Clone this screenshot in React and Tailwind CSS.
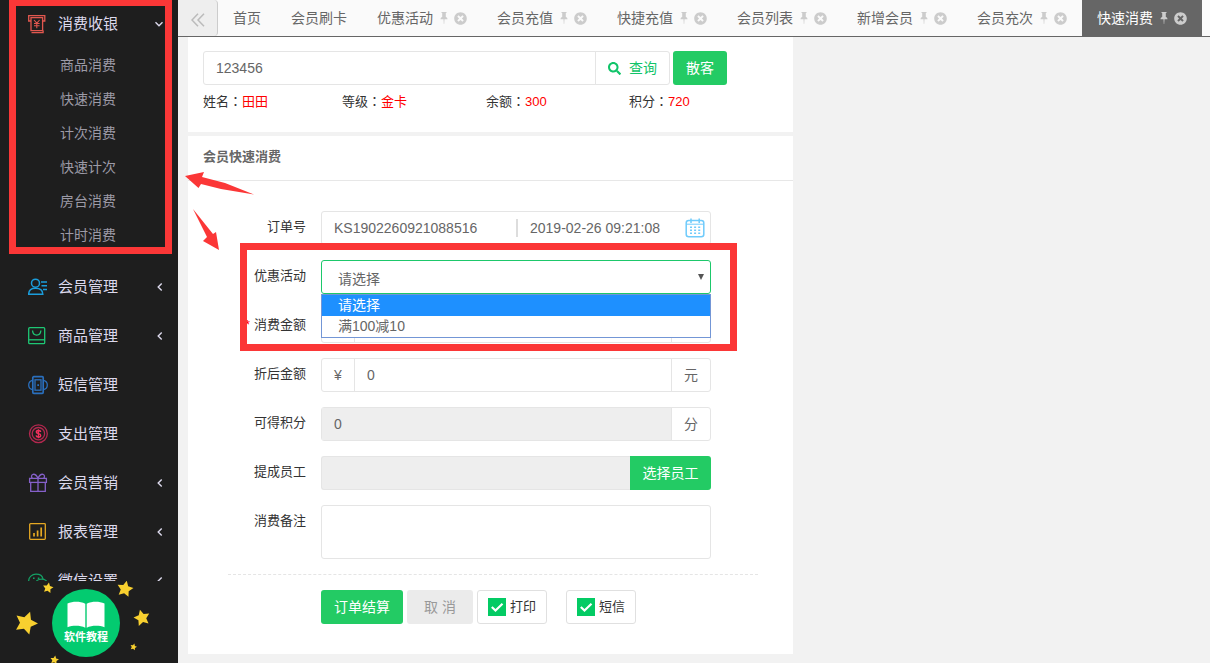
import React, { useState } from 'react';
import clsx from 'clsx';
import { FaSearch, FaTimesCircle } from 'react-icons/fa';

const subMenu = ['商品消费', '快速消费', '计次消费', '快速计次', '房台消费', '计时消费'];

const menu = [
  { name: '会员管理', icon: MemberIcon, hasChildren: true },
  { name: '商品管理', icon: BagIcon, hasChildren: true },
  { name: '短信管理', icon: SmsIcon },
  { name: '支出管理', icon: ExpenseIcon },
  { name: '会员营销', icon: GiftIcon, hasChildren: true },
  { name: '报表管理', icon: ReportIcon, hasChildren: true },
  { name: '微信设置', icon: WechatIcon, hasChildren: true },
];

const tabs = [
  { name: '首页' },
  { name: '会员刷卡' },
  { name: '优惠活动', closable: true },
  { name: '会员充值', closable: true },
  { name: '快捷充值', closable: true },
  { name: '会员列表', closable: true },
  { name: '新增会员', closable: true },
  { name: '会员充次', closable: true },
  { name: '快速消费', closable: true, active: true },
];

const activities = ['请选择', '满100减10'];

function Icon({ className, children }) {
  return (
    <svg
      viewBox="0 0 20 20"
      className={clsx('h-5 w-5 shrink-0', className)}
      fill="none"
      stroke="currentColor"
      strokeWidth="1.3"
    >
      {children}
    </svg>
  );
}

function CashIcon() {
  return (
    <Icon className="text-[#e2574f]">
      <path d="M3 7H.7V1.600h16.100V7h-2.300" />
      <path d="M3 3.700h11.600v13H3z" />
      <path d="M3.500 18.600h11.600v-2" />
      <path d="M6 6l2.800 3.200L11.600 6M6 9.500h5.600M6 11.800h5.600M8.800 9.200v5" strokeWidth="1.1" />
    </Icon>
  );
}

function MemberIcon() {
  return (
    <Icon className="text-[#1b9ddb]">
      <circle cx="7.500" cy="6.200" r="4" strokeWidth="1.500" />
      <path d="M.7 17.300c0-4 2.500-6 6.800-6s7.300 2 7.300 6z" strokeWidth="1.500" />
      <path d="M13 5h6M13.500 8.700H19M15 12.500h4" strokeWidth="1.500" />
    </Icon>
  );
}

function BagIcon() {
  return (
    <Icon className="text-[#1ec774]">
      <rect x=".7" y="1.700" width="16" height="16" rx="1" />
      <path d="M.7 13.800h16" />
      <path d="M4.500 4.500c.3 3 2 4.600 4.200 4.600s3.900-1.600 4.200-4.600" />
    </Icon>
  );
}

function SmsIcon() {
  return (
    <Icon className="text-[#2a6fbd]">
      <rect x="4.800" y="1.700" width="10.400" height="16.600" rx="1" strokeWidth="1.700" />
      <rect x="7" y="4.800" width="6" height="10.400" />
      <path d="M9.300 9.300h1.700V11H9.300z" fill="currentColor" stroke="none" />
      <path d="M4.500 5.300C1.700 6 .7 8 .7 10s1 4 3.800 4.700M15.500 5.300c2.800.7 3.800 2.700 3.800 4.700s-1 4-3.800 4.700" />
    </Icon>
  );
}

function ExpenseIcon() {
  return (
    <Icon className="text-[#b3284f]">
      <circle cx="10.400" cy="9.700" r="8.900" />
      <circle cx="10.400" cy="9.700" r="6.200" />
      <path
        d="M12.600 8c0-1-.9-1.500-2.200-1.500S8.300 7 8.300 8s.9 1.400 2.100 1.600 2.300.7 2.300 1.800-1 1.600-2.300 1.600-2.200-.6-2.300-1.600M10.400 5.300v8.900"
        stroke="#f0305c"
        strokeWidth="1.400"
      />
    </Icon>
  );
}

function GiftIcon() {
  return (
    <Icon className="text-[#8560c9]">
      <rect x="1.600" y="5.400" width="16.800" height="4" />
      <path d="M2.700 9.400v8.900h14.600V9.400M10 5.400v12.900" />
      <path d="M10 5.200C8.500 2 6.500 1 5 1.300s-2 2.500-.7 3.900M10 5.200c1.500-3.200 3.500-4.200 5-3.900s2 2.500.7 3.900" />
    </Icon>
  );
}

function ReportIcon() {
  return (
    <Icon className="text-[#e5a823]">
      <rect x="1.700" y="1.700" width="15.600" height="15.600" rx=".8" />
      <path d="M6 11v3.500M9.600 8.500v6M13.200 5.500v9" strokeWidth="1.700" />
    </Icon>
  );
}

function WechatIcon() {
  return (
    <Icon className="text-[#14a065]">
      <path d="M3.500 14.500C1.500 13.200.7 11.500.7 9.600.7 6.200 3.900 3.200 8 3.200c3.600 0 6.500 2 7 4.900" />
      <path d="M13.500 8.200c3.500 0 6 2 6 4.700s-2.500 4.600-6 4.600-6-2-6-4.600 2.500-4.700 6-4.700z" />
      <path d="M5 6.500h1.600v1.600H5zM9.800 6.500h1.600v1.600H9.800z" fill="currentColor" stroke="none" />
    </Icon>
  );
}

function PinIcon() {
  return (
    <svg viewBox="0 0 8 12" className="h-3 w-2" fill="currentColor">
      <path d="M1.500 0h5v1h-.7v4c1 .4 1.700 1.200 1.700 2.200h-3L4.200 12h-.4L3.500 7.200h-3C.5 6.200 1.200 5.400 2.200 5V1h-.7z" />
    </svg>
  );
}

function CalendarIcon() {
  return (
    <svg viewBox="0 0 20 20" className="h-5 w-5" fill="none" stroke="#6fcbfb" strokeWidth="1.500">
      <rect x="1.200" y="2.500" width="17.600" height="16.300" rx="2.500" />
      <path d="M1.200 6.200h17.600" strokeWidth="1" />
      <path d="M6 .5v4.500M14.200 .5v4.500" />
      <path d="M5 9.300h10.500M5 12.300h10.500M5 15.200h10.500" strokeDasharray="2 2.100" />
    </svg>
  );
}

function Star({ x, y, r, turn }) {
  const points = Array.from({ length: 10 }, (_, i) => {
    const radius = i % 2 === 0 ? r : r * 0.5;
    const angle = ((turn + i * 36 - 90) * Math.PI) / 180;
    return `${x + radius * Math.cos(angle)},${y + radius * Math.sin(angle)}`;
  }).join(' ');
  return <polygon points={points} />;
}

function Tutorial() {
  return (
    <div className="relative h-[82px] shrink-0 overflow-hidden">
      <svg viewBox="0 0 178 82" className="absolute left-0 top-0 h-[82px] w-[178px]" fill="#f8d02f">
        <Star x={26} y={42} r={12} turn={20} />
        <Star x={48} y={7} r={5.5} turn={10} />
        <Star x={125} y={8} r={8.5} turn={12} />
        <Star x={142} y={37} r={8.500} turn={-14} />
        <Star x={133.500} y={66} r={3.500} turn={15} />
        <Star x={54.500} y={79} r={4.500} turn={10} />
      </svg>
      <button className="relative ml-[52px] mt-2 flex h-[68px] w-[68px] flex-col items-center rounded-full bg-[#03cb70] pt-3">
        <svg viewBox="0 0 38 28" className="h-7 w-[38px]" fill="#fff">
          <path d="M.5 2.500C6 .2 13 .2 18.300 2.800v24C13 24.300 6 24.300.5 26.300z" />
          <path d="M37.500 2.500C32 .2 25 .2 19.700 2.800v24c5.300-2.500 12.300-2.500 17.800-.5z" />
        </svg>
        <span className="text-[11px] leading-4 font-bold text-white">软件教程</span>
      </button>
    </div>
  );
}

function Sidebar() {
  return (
    <aside className="flex w-[178px] shrink-0 flex-col bg-[#1e1e1e]">
      <nav className="min-h-0 flex-1 overflow-hidden">
        <div className="relative pb-[10px]">
          <a href="#cashier" className="flex h-12 items-center gap-[10px] pr-[14px] pl-7 text-[15px] text-[#dcd9ec]">
            <CashIcon />
            <span className="flex-1">消费收银</span>
            <svg viewBox="0 0 10 10" className="h-[10px] w-[10px]" fill="none" stroke="currentColor" strokeWidth="1.400">
              <path d="M1.500 3.200L5 6.700l3.500-3.500" />
            </svg>
          </a>
          <ul>
            {subMenu.map((name) => (
              <li key={name}>
                <a href="#sub" className="flex h-[34px] items-center pl-[60px] text-sm text-[#9c9aa6]">
                  {name}
                </a>
              </li>
            ))}
          </ul>
          <div className="pointer-events-none absolute top-0 left-[9px] h-[254px] w-[163px] border-[7px] border-t-[6px] border-[#fb3737]" />
        </div>
        <ul>
          {menu.map(({ name, icon: MenuIcon, hasChildren }) => (
            <li key={name}>
              <a href="#menu" className="flex h-[49px] items-center gap-[10px] pr-[13px] pl-7 text-[15px] text-[#dcd9ec]">
                <MenuIcon />
                <span className="flex-1 pt-0.5">{name}</span>
                {hasChildren && (
                  <svg viewBox="0 0 10 10" className="h-[10px] w-[10px]" fill="none" stroke="currentColor" strokeWidth="1.400">
                    <path d="M6.700 1.500L3.200 5l3.500 3.500" />
                  </svg>
                )}
              </a>
            </li>
          ))}
        </ul>
      </nav>
      <Tutorial />
    </aside>
  );
}

function TabBar() {
  return (
    <div className="flex h-[37px] shrink-0 overflow-hidden border-b border-[#666] bg-[#fafafa]">
      <button
        aria-label="收起"
        className="flex w-10 shrink-0 items-center justify-center rounded-r-sm border-r border-[#ccc] bg-[#eee]"
      >
        <svg viewBox="0 0 14 14" className="mt-1 h-[14px] w-[14px]" fill="none" stroke="#bbb" strokeWidth="1.500">
          <path d="M7 .7L1 7l6 6.300M13 .7L7 7l6 6.300" />
        </svg>
      </button>
      {tabs.map((tab) => (
        <div
          key={tab.name}
          className={clsx(
            'flex shrink-0 items-center px-[15px] text-sm',
            tab.active ? 'bg-[#666] text-white' : 'text-[#666]'
          )}
        >
          <a href="#tab">{tab.name}</a>
          {tab.closable && (
            <span className="flex items-center text-[#ccc]">
              <button aria-label="固定" className="ml-[7px]">
                <PinIcon />
              </button>
              <button aria-label="关闭" className="ml-[6px]">
                <FaTimesCircle className="h-[13px] w-[13px]" />
              </button>
            </span>
          )}
        </div>
      ))}
    </div>
  );
}

function MemberInfo({ label, value }) {
  return (
    <span>
      {label}
      <span className="font-['Noto_Sans_CJK_TC',sans-serif]" lang="zh-TW">：</span>
      <span className="text-[#f00]">{value}</span>
    </span>
  );
}

function SearchCard() {
  return (
    <section className="bg-white px-[15px] pt-[14px] pb-5">
      <div className="flex">
        <input
          aria-label="会员卡号"
          defaultValue="123456"
          className="h-[34px] w-[393px] rounded-l-[3px] border border-[#e5e5e5] px-3 text-sm text-[#666]"
        />
        <button className="-ml-px flex h-[34px] w-[75px] items-center justify-center gap-2 rounded-r-[3px] border border-[#e5e5e5] text-sm text-[#10c469]">
          <FaSearch className="h-[13px] w-[13px]" />
          查询
        </button>
        <button className="ml-[3px] h-[34px] w-[54px] rounded-[3px] bg-[#23cb64] text-sm text-white">散客</button>
      </div>
      <div className="grid grid-cols-[139px_144px_143px_1fr] pt-1.5 text-[13px] leading-5 text-[#333]">
        <MemberInfo label="姓名" value="田田" />
        <MemberInfo label="等级" value="金卡" />
        <MemberInfo label="余额" value="300" />
        <MemberInfo label="积分" value="720" />
      </div>
    </section>
  );
}

function Field({ id, label, required, children }) {
  return (
    <div className="flex gap-[15px]">
      <label htmlFor={id} className="w-[78px] shrink-0 text-right text-[13px] leading-8 text-[#333]">
        {required && <span className="mr-1 text-[#f00]">*</span>}
        {label}
      </label>
      <div className="relative flex w-[390px]">{children}</div>
    </div>
  );
}

function Money({ id, value }) {
  return (
    <div className="flex h-[34px] w-full rounded-[3px] border border-[#e5e5e5] text-sm text-[#666]">
      <span className="flex w-8 items-center justify-center">¥</span>
      <input id={id} defaultValue={value} className="min-w-0 flex-1 border-x border-[#e5e5e5] px-3" />
      <span className="flex w-[38px] items-center justify-center">元</span>
    </div>
  );
}

function Tick({ label }) {
  return (
    <label className="flex h-[34px] w-[70px] items-center gap-1 rounded-[3px] border border-[#e0e0e0] pl-[10px] text-[13px] text-[#333]">
      <span className="grid">
        <input
          type="checkbox"
          defaultChecked
          className="peer col-start-1 row-start-1 h-[18px] w-[18px] appearance-none border border-[#ccc] checked:border-[#03cb64] checked:bg-[#03cb64]"
        />
        <svg
          viewBox="0 0 18 18"
          className="pointer-events-none invisible col-start-1 row-start-1 h-[18px] w-[18px] peer-checked:visible"
          fill="none"
          stroke="#fff"
          strokeWidth="2.200"
        >
          <path d="M3.800 9l3.700 3.500 7-6.700" />
        </svg>
      </span>
      {label}
    </label>
  );
}

function OrderCard() {
  const [activity, setActivity] = useState(activities[0]);

  return (
    <section className="mt-1 bg-white">
      <h2 className="h-[45px] border-b border-[#e7e7e7] px-[15px] text-[13px] leading-[42px] font-bold text-[#666]">
        会员快速消费
      </h2>
      <form className="pt-[30px] pr-[35px] pb-[30px] pl-10">
        <div className="flex flex-col gap-[15px]">
          <Field id="order" label="订单号">
            <div className="flex h-[34px] w-full items-center rounded-[3px] border border-[#e5e5e5] pr-[5px] text-sm text-[#666]">
              <input id="order" defaultValue="KS1902260921088516" className="w-[194px] pl-3" />
              <span className="h-[18px] w-0.5 bg-[#ddd]" />
              <input aria-label="日期" defaultValue="2019-02-26 09:21:08" className="min-w-0 flex-1 pl-3" />
              <CalendarIcon />
            </div>
          </Field>

          <Field id="activity" label="优惠活动">
            <select
              id="activity"
              value={activity}
              onChange={(e) => setActivity(e.target.value)}
              className="h-[34px] w-full appearance-none rounded-[3px] border border-[#1dc86b] px-4 pt-1 text-sm text-[#666]"
            >
              {activities.map((name) => (
                <option key={name}>{name}</option>
              ))}
            </select>
            <svg viewBox="0 0 6 6" className="absolute top-[14px] right-[7px] h-1.5 w-1.5" fill="#555">
              <path d="M0 0h6L3 6z" />
            </svg>
            <ul className="absolute top-[34px] left-0 z-10 w-full border border-[#7396d6] bg-white text-sm leading-[21px] text-[#666]">
              {activities.map((name) => (
                <li key={name} className={clsx('px-4', name === activity && 'bg-[#1e90ff] text-white')}>
                  {name}
                </li>
              ))}
            </ul>
          </Field>

          <Field id="amount" label="消费金额" required>
            <Money id="amount" value="" />
          </Field>

          <Field id="discounted" label="折后金额">
            <Money id="discounted" value="0" />
          </Field>

          <Field id="points" label="可得积分">
            <div className="flex h-[34px] w-full rounded-[3px] border border-[#e5e5e5] text-sm text-[#666]">
              <input id="points" readOnly value="0" className="min-w-0 flex-1 border-r border-[#e5e5e5] bg-[#eee] px-3" />
              <span className="flex w-[38px] items-center justify-center">分</span>
            </div>
          </Field>

          <Field id="staff" label="提成员工">
            <input
              id="staff"
              readOnly
              className="h-[34px] min-w-0 flex-1 rounded-l-[3px] border border-r-0 border-[#e5e5e5] bg-[#eee] px-3 text-sm"
            />
            <button type="button" className="h-[34px] w-[81px] rounded-r-[3px] bg-[#23cb64] text-sm text-white">
              选择员工
            </button>
          </Field>

          <Field id="remark" label="消费备注">
            <textarea id="remark" className="h-[54px] w-full resize-none rounded-[3px] border border-[#e5e5e5] px-3 py-1.5 text-sm" />
          </Field>
        </div>

        <div className="mt-[15px] flex gap-1 border-t border-dashed border-[#e5e5e5] pt-[15px] pl-[93px]">
          <button type="button" className="h-[34px] w-[82px] rounded-[3px] bg-[#23cb64] text-sm text-white">
            订单结算
          </button>
          <button type="button" className="h-[34px] w-[66px] rounded-[3px] bg-[#ebebeb] text-sm text-[#999]">
            取 消
          </button>
          <div className="flex gap-[19px]">
            <Tick label="打印" />
            <Tick label="短信" />
          </div>
        </div>
      </form>
    </section>
  );
}

export default function App() {
  return (
    <div className="flex h-screen bg-[#f2f2f2] font-['Liberation_Sans','Noto_Sans_CJK_SC',sans-serif]">
      <Sidebar />
      <main className="flex min-w-0 flex-1 flex-col">
        <TabBar />
        <div className="relative min-h-0 flex-1 overflow-hidden pl-[10px]">
          <div className="w-full max-w-[605px]">
            <SearchCard />
            <OrderCard />
          </div>

          {/* guide marks */}
          <svg viewBox="0 0 80 90" className="pointer-events-none absolute top-[130px] left-0 h-[90px] w-20" fill="#fb3737">
            <path d="M7 9l19-4-2 5 23 6 29 11.500L43 22l-20-5-2.500 4z" />
            <path d="M15 42l20 25 3-2 3 18-16-9 4-4z" />
          </svg>
          <div className="pointer-events-none absolute top-[206px] left-[62px] z-20 h-[108px] w-[497px] border-[7px] border-[#fb3737]" />
        </div>
      </main>
    </div>
  );
}
